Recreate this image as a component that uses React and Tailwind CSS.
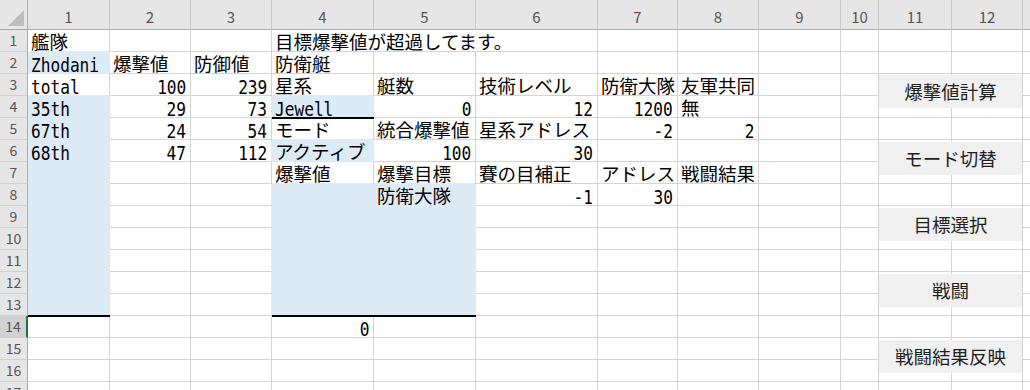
import React from "react";

const COLS = [82, 81, 81, 102, 102, 122, 80, 81, 82, 38, 73, 71];
const ROWS = 17;

// r-c -> { t, latin, right, span }
const cells = {
  "1-1": { t: "艦隊" },
  "1-4": { t: "目標爆撃値が超過してます。", span: 3 },
  "2-1": { t: "Zhodani", latin: true },
  "2-2": { t: "爆撃値" },
  "2-3": { t: "防御値" },
  "2-4": { t: "防衛艇" },
  "3-1": { t: "total", latin: true },
  "3-2": { t: "100", latin: true, right: true },
  "3-3": { t: "239", latin: true, right: true },
  "3-4": { t: "星系" },
  "3-5": { t: "艇数" },
  "3-6": { t: "技術レベル" },
  "3-7": { t: "防衛大隊" },
  "3-8": { t: "友軍共同" },
  "4-1": { t: "35th", latin: true },
  "4-2": { t: "29", latin: true, right: true },
  "4-3": { t: "73", latin: true, right: true },
  "4-4": { t: "Jewell", latin: true },
  "4-5": { t: "0", latin: true, right: true },
  "4-6": { t: "12", latin: true, right: true },
  "4-7": { t: "1200", latin: true, right: true },
  "4-8": { t: "無" },
  "5-1": { t: "67th", latin: true },
  "5-2": { t: "24", latin: true, right: true },
  "5-3": { t: "54", latin: true, right: true },
  "5-4": { t: "モード" },
  "5-5": { t: "統合爆撃値" },
  "5-6": { t: "星系アドレス" },
  "5-7": { t: "-2", latin: true, right: true },
  "5-8": { t: "2", latin: true, right: true },
  "6-1": { t: "68th", latin: true },
  "6-2": { t: "47", latin: true, right: true },
  "6-3": { t: "112", latin: true, right: true },
  "6-4": { t: "アクティブ" },
  "6-5": { t: "100", latin: true, right: true },
  "6-6": { t: "30", latin: true, right: true },
  "7-4": { t: "爆撃値" },
  "7-5": { t: "爆撃目標" },
  "7-6": { t: "賽の目補正" },
  "7-7": { t: "アドレス" },
  "7-8": { t: "戦闘結果" },
  "8-5": { t: "防衛大隊" },
  "8-6": { t: "-1", latin: true, right: true },
  "8-7": { t: "30", latin: true, right: true },
  "14-4": { t: "0", latin: true, right: true },
};

const thick = new Set(["4-4", "13-1", "13-4", "13-5"]);

function isBlue(r, c) {
  if (c === 1) return r === 2 || (r >= 4 && r <= 13);
  if (c === 4) return r === 4 || r === 6 || (r >= 8 && r <= 13);
  if (c === 5) return r >= 8 && r <= 13;
  return false;
}

const buttons = [
  { label: "爆撃値計算", top: "top-[75px]" },
  { label: "モード切替", top: "top-[142px]" },
  { label: "目標選択", top: "top-[208px]" },
  { label: "戦闘", top: "top-[274px]" },
  { label: "戦闘結果反映", top: "top-[340px]" },
];

function Cell({ r, c }) {
  const cell = cells[`${r}-${c}`];
  const span = cell?.span || 1;
  const blue = isBlue(r, c);
  const rightBlue = blue || isBlue(r, c + span);
  const downBlue = blue || isBlue(r + 1, c);
  const cls = [
    "relative h-[22px] border-r border-b whitespace-nowrap text-black",
    span === 3 ? "col-span-3" : "",
    blue ? "bg-[#ddebf7]" : "bg-white",
    rightBlue ? "border-r-[#ddebf7]" : "border-r-[#d4d4d4]",
    downBlue ? "border-b-[#ddebf7]" : "border-b-[#d4d4d4]",
    cell?.right ? "pr-[4px]" : "pl-[3px]",
    cell?.latin
      ? "flex items-end font-['DejaVu_Sans_Mono',monospace] text-[19px] " +
        (cell.right ? "justify-end" : "justify-start")
      : "leading-[22px] font-['Noto_Sans_CJK_JP',sans-serif] text-[18.5px]",
  ].join(" ");
  return (
    <div className={cls}>
      {cell &&
        (cell.latin ? (
          <span
            className={
              "block leading-[16px] scale-x-85 " +
              (cell.right ? "origin-right" : "origin-left")
            }
          >
            {cell.t}
          </span>
        ) : (
          cell.t
        ))}
      {thick.has(`${r}-${c}`) && (
        <div className="absolute left-0 right-[-1px] bottom-[-2px] h-[2px] bg-black z-10" />
      )}
    </div>
  );
}

function Row({ r }) {
  const out = [];
  const selected = r === 14;
  out.push(
    <div
      key="h"
      className={
        "h-[22px] border-b border-b-[#d0d0d0] text-center text-[14px] leading-[21px] text-[#555] font-['Noto_Sans_CJK_JP',sans-serif] " +
        (selected
          ? "bg-[#d2d2d2] border-r-2 border-r-[#217346]"
          : "bg-[#e6e6e6] border-r border-r-[#ababab]")
      }
    >
      {r}
    </div>
  );
  for (let c = 1; c <= COLS.length; c++) {
    const cell = cells[`${r}-${c}`];
    out.push(<Cell key={c} r={r} c={c} />);
    if (cell?.span) c += cell.span - 1;
  }
  out.push(<div key="x" className="h-[22px] border-b border-b-[#d4d4d4] bg-white" />);
  return out;
}

export default function App() {
  return (
    <div className="relative w-[1030px] h-[390px] overflow-hidden bg-white">
      <div className="grid grid-cols-[28px_82px_81px_81px_102px_102px_122px_80px_81px_82px_38px_73px_71px_1fr]">
        <div className="h-[30px] bg-[#e6e6e6] border-r border-b border-r-[#ababab] border-b-[#ababab] flex items-end justify-end pr-[2px] pb-[2px]">
          <svg width="18" height="18" viewBox="0 0 18 18">
            <polygon points="17,1 17,17 1,17" fill="#bdbdbd" />
          </svg>
        </div>
        {COLS.map((w, i) => (
          <div
            key={i}
            className="h-[30px] bg-[#e6e6e6] border-r border-b border-r-[#c8c8c8] border-b-[#ababab] flex items-center justify-center pt-[5px] text-[15px] text-[#555] font-['Noto_Sans_CJK_JP',sans-serif]"
          >
            {i + 1}
          </div>
        ))}
        <div className="h-[30px] bg-[#e6e6e6] border-b border-b-[#ababab]" />
        {Array.from({ length: ROWS }, (_, i) => (
          <Row key={i} r={i + 1} />
        ))}
      </div>

      {buttons.map((b) => (
        <div
          key={b.label}
          className={
            "absolute left-[879px] w-[143px] h-[33px] bg-[#f0f0f0] flex items-center justify-center text-[18.5px] text-[#1f1f1f] font-['Noto_Sans_CJK_JP',sans-serif] " +
            b.top
          }
        >
          {b.label}
        </div>
      ))}
    </div>
  );
}
